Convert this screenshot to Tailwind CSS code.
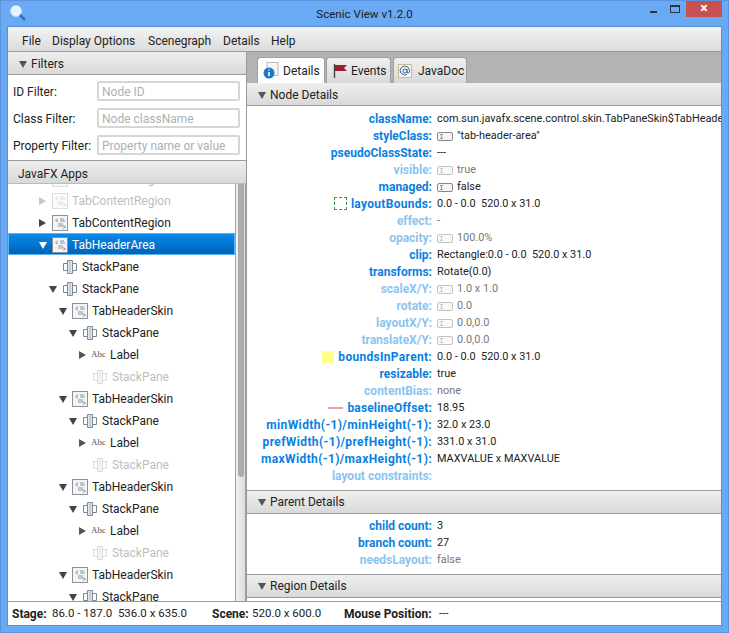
<!DOCTYPE html>
<html lang="en">
<head>
  <meta charset="UTF-8" />
  <script src="https://cdn.jsdelivr.net/npm/@tailwindcss/browser@4"></script>
  <title>Scenic View</title>
</head>
<body class="bg-[#6aa9f4] shadow-[inset_0_0_0_1px_#5b94dc] h-[633px] w-[729px] overflow-hidden font-['Roboto','Noto_Sans',sans-serif] text-[12px] text-[#222]">

  <svg class="hidden">
    <symbol id="cls" viewBox="0 0 16 16">
      <rect x="0.5" y="0.5" width="15" height="15" fill="#f4f4f4" stroke="#8a939b"/>
      <path d="M6 4L3.500 5.500L6 7M8 4h4M8 6h5M6 9h5M6 11h5M11 10.500l2.500 1.500l-2.500 1.500" fill="none" stroke="#8d969e"/>
    </symbol>
    <symbol id="pane" viewBox="0 0 14 16">
      <path d="M0.500 4.500h4v7h-4zM9.500 4.500h4v7h-4z" fill="#fff" stroke="#7c8894"/>
      <path d="M4.500 1.500h5v13h-5z" fill="#e3e9f0" stroke="#7c8894"/>
      <path d="M7 1.500v13" stroke="#a5afb9"/>
    </symbol>
    <symbol id="toggle" viewBox="0 0 16 9">
      <rect x="0.500" y="0.500" width="15" height="8" rx="1.500" fill="#f4f4f4" stroke="#888"/>
      <path d="M3 2.500h3M3 6.500h3M4.500 2.500v4" stroke="#999" fill="none"/>
    </symbol>
  </svg>

  <!-- Title bar -->
  <header class="h-[27px] flex items-start relative">
    <svg class="w-[18px] h-[18px] ml-[9px] mt-[4px]" viewBox="0 0 18 18">
      <circle cx="7" cy="7" r="5.500" fill="#e8f4ff" stroke="#bcdcf7"/>
      <path d="M11 11l5 5" stroke="#2f6fc0" stroke-width="2.500"/>
    </svg>
    <div class="absolute left-0 right-0 top-[5px] text-center text-[11.6px] text-[#1c1c1c] leading-[18px]">Scenic View v1.2.0</div>
    <div class="ml-auto flex items-start mr-[7px]">
      <div class="w-[7px] h-[2px] bg-[#2b3340] mt-[11px] mr-[13px]"></div>
      <div class="w-[10px] h-[8px] border border-[#2b3340] border-t-2 mt-[5px] mr-[6px]"></div>
      <div class="w-[36px] h-[16px] mt-px bg-[#c75050] text-white text-[14px] leading-[15px] text-center font-bold">×</div>
    </div>
  </header>

  <div class="mx-[8px] h-[598px] bg-white flex flex-col outline outline-[#5b8fd0]">
    <!-- Menu -->
    <nav class="h-[25px] pt-[3px] flex items-center pl-[14px] bg-gradient-to-b from-[#f3f3f3] to-[#dcdcdc] border-b border-[#9a9a9a] shrink-0">
      <span class="w-[30px]">File</span><span class="w-[96px]">Display Options</span><span class="w-[75px]">Scenegraph</span><span class="w-[48px]">Details</span><span>Help</span>
    </nav>

    <div class="flex flex-1 min-h-0">
      <!-- Left side -->
      <aside class="w-[238px] flex flex-col shrink-0">
        <div class="h-[23px] pt-[2px] flex items-center pl-[11px] gap-[4px] bg-gradient-to-b from-[#efefef] to-[#d9d9d9] border-b border-[#9a9a9a]">
          <span class="w-0 h-0 border-x-[4px] border-x-transparent border-t-[7px] border-t-[#555]"></span>
          <span>Filters</span>
        </div>
        <div class="h-[86px] px-[5px] pt-[6px] flex flex-col gap-[7px] border-b border-[#9a9a9a]">
          <label class="flex items-center h-[20px]"><span class="w-[84px] pt-[2px]">ID Filter:</span><span class="w-[143px] h-[20px] border-2 border-[#d6d6d6] rounded-[2px] pl-[3px] leading-[18px] text-[#b0b0b0]">Node ID</span></label>
          <label class="flex items-center h-[20px]"><span class="w-[84px] pt-[2px]">Class Filter:</span><span class="w-[143px] h-[20px] border-2 border-[#d6d6d6] rounded-[2px] pl-[3px] leading-[18px] text-[#b0b0b0]">Node className</span></label>
          <label class="flex items-center h-[20px]"><span class="w-[84px] pt-[2px]">Property Filter:</span><span class="w-[143px] h-[20px] border-2 border-[#d6d6d6] rounded-[2px] pl-[3px] leading-[18px] text-[#b0b0b0]">Property name or value</span></label>
        </div>
        <div class="h-[23px] pt-[4px] flex items-center pl-[10px] bg-gradient-to-b from-[#efefef] to-[#d9d9d9] border-b border-[#bbb] shrink-0">JavaFX Apps</div>

        <div class="flex-1 flex min-h-0 overflow-hidden">
          <div class="flex-1 min-w-0 overflow-hidden">
            <div class="-mt-[17px] [&>div]:h-[22px] [&>div]:pt-[2px] [&>div]:flex [&>div]:items-center [&>div]:whitespace-nowrap">
              <div class="pl-[31px] opacity-30"><span class="w-[13px]"></span><svg class="w-[16px] h-[16px] mr-[4px]"><use href="#cls"/></svg>TabContentRegion</div>
              <div class="pl-[31px] opacity-30"><span class="w-0 h-0 mr-[6px] border-y-[4px] border-y-transparent border-l-[7px] border-l-[#444]"></span><svg class="w-[16px] h-[16px] mr-[4px]"><use href="#cls"/></svg>TabContentRegion</div>
              <div class="pl-[31px]"><span class="w-0 h-0 mr-[6px] border-y-[4px] border-y-transparent border-l-[7px] border-l-[#444]"></span><svg class="w-[16px] h-[16px] mr-[4px]"><use href="#cls"/></svg>TabContentRegion</div>
              <div class="pl-[30px] bg-gradient-to-b from-[#0a8aea] to-[#0063b8] border border-[#5cb5f5] text-white"><span class="w-0 h-0 mr-[5px] border-x-[4px] border-x-transparent border-t-[7px] border-t-white"></span><svg class="w-[16px] h-[16px] mr-[4px]"><use href="#cls"/></svg>TabHeaderArea</div>
              <div class="pl-[55px]"><svg class="w-[14px] h-[16px] mr-[5px]"><use href="#pane"/></svg>StackPane</div>
              <div class="pl-[41px]"><span class="w-0 h-0 mr-[6px] border-x-[4px] border-x-transparent border-t-[7px] border-t-[#444]"></span><svg class="w-[14px] h-[16px] mr-[5px]"><use href="#pane"/></svg>StackPane</div>
              <div class="pl-[51px]"><span class="w-0 h-0 mr-[5px] border-x-[4px] border-x-transparent border-t-[7px] border-t-[#444]"></span><svg class="w-[16px] h-[16px] mr-[4px]"><use href="#cls"/></svg>TabHeaderSkin</div>
              <div class="pl-[61px]"><span class="w-0 h-0 mr-[6px] border-x-[4px] border-x-transparent border-t-[7px] border-t-[#444]"></span><svg class="w-[14px] h-[16px] mr-[5px]"><use href="#pane"/></svg>StackPane</div>
              <div class="pl-[71px]"><span class="w-0 h-0 mr-[5px] border-y-[4px] border-y-transparent border-l-[7px] border-l-[#555]"></span><span class="w-[15px] mr-[4px] font-['Liberation_Serif'] text-[9px] text-[#555]">Abc</span>Label</div>
              <div class="pl-[85px] opacity-30"><svg class="w-[14px] h-[16px] mr-[5px]"><use href="#pane"/></svg>StackPane</div>
              <div class="pl-[51px]"><span class="w-0 h-0 mr-[5px] border-x-[4px] border-x-transparent border-t-[7px] border-t-[#444]"></span><svg class="w-[16px] h-[16px] mr-[4px]"><use href="#cls"/></svg>TabHeaderSkin</div>
              <div class="pl-[61px]"><span class="w-0 h-0 mr-[6px] border-x-[4px] border-x-transparent border-t-[7px] border-t-[#444]"></span><svg class="w-[14px] h-[16px] mr-[5px]"><use href="#pane"/></svg>StackPane</div>
              <div class="pl-[71px]"><span class="w-0 h-0 mr-[5px] border-y-[4px] border-y-transparent border-l-[7px] border-l-[#555]"></span><span class="w-[15px] mr-[4px] font-['Liberation_Serif'] text-[9px] text-[#555]">Abc</span>Label</div>
              <div class="pl-[85px] opacity-30"><svg class="w-[14px] h-[16px] mr-[5px]"><use href="#pane"/></svg>StackPane</div>
              <div class="pl-[51px]"><span class="w-0 h-0 mr-[5px] border-x-[4px] border-x-transparent border-t-[7px] border-t-[#444]"></span><svg class="w-[16px] h-[16px] mr-[4px]"><use href="#cls"/></svg>TabHeaderSkin</div>
              <div class="pl-[61px]"><span class="w-0 h-0 mr-[6px] border-x-[4px] border-x-transparent border-t-[7px] border-t-[#444]"></span><svg class="w-[14px] h-[16px] mr-[5px]"><use href="#pane"/></svg>StackPane</div>
              <div class="pl-[71px]"><span class="w-0 h-0 mr-[5px] border-y-[4px] border-y-transparent border-l-[7px] border-l-[#555]"></span><span class="w-[15px] mr-[4px] font-['Liberation_Serif'] text-[9px] text-[#555]">Abc</span>Label</div>
              <div class="pl-[85px] opacity-30"><svg class="w-[14px] h-[16px] mr-[5px]"><use href="#pane"/></svg>StackPane</div>
              <div class="pl-[51px]"><span class="w-0 h-0 mr-[5px] border-x-[4px] border-x-transparent border-t-[7px] border-t-[#444]"></span><svg class="w-[16px] h-[16px] mr-[4px]"><use href="#cls"/></svg>TabHeaderSkin</div>
              <div class="pl-[61px]"><span class="w-0 h-0 mr-[6px] border-x-[4px] border-x-transparent border-t-[7px] border-t-[#444]"></span><svg class="w-[14px] h-[16px] mr-[5px]"><use href="#pane"/></svg>StackPane</div>
            </div>
          </div>
          <div class="w-[11px] shrink-0 bg-gradient-to-r from-[#f2f2f2] to-[#dcdcdc] border-x border-[#9f9f9f] flex">
            <div class="w-[6px] h-[293px] bg-[#ababab] rounded-b-[3px] ml-[2px]"></div>
          </div>
        </div>
      </aside>

      <!-- Right side -->
      <main class="flex-1 min-w-0 flex flex-col border-l border-[#9a9a9a]">
        <div class="h-[31px] bg-[#b3b3b3] flex items-end pl-[10px] shrink-0">
          <div class="h-[26px] w-[68px] bg-white rounded-t-[4px] border border-b-0 border-[#a0a0a0] flex items-center gap-[4px] pl-[5px]">
            <svg class="w-[16px] h-[17px]" viewBox="0 0 16 17"><rect x="4" y="0.500" width="11" height="13" fill="#f6f6f6" stroke="#bbb"/><circle cx="6" cy="11" r="5.500" fill="#1c78c8"/><path d="M6 7.500v1M6 10v4" stroke="#fff" stroke-width="1.600"/></svg>
            <span>Details</span>
          </div>
          <div class="h-[26px] w-[65px] ml-px bg-gradient-to-b from-[#f0f0f0] to-[#d9d9d9] rounded-t-[4px] border border-b-0 border-[#a0a0a0] flex items-center gap-[4px] pl-[6px]">
            <svg class="w-[14px] h-[16px]" viewBox="0 0 14 16"><path d="M1.500 1v14" stroke="#444" stroke-width="1.400"/><path d="M2 2h12l-3 3l3 3h-12z" fill="#9c1f2b"/></svg>
            <span>Events</span>
          </div>
          <div class="h-[26px] w-[74px] ml-[2px] bg-gradient-to-b from-[#f0f0f0] to-[#d9d9d9] rounded-t-[4px] border border-b-0 border-[#a0a0a0] flex items-center gap-[6px] pl-[4px]">
            <svg class="w-[14px] h-[16px]" viewBox="0 0 14 16"><path d="M0.500 1.500h13v13h-13z" fill="#fbf5e6" stroke="#c9b98a"/><circle cx="7" cy="8" r="2" fill="none" stroke="#2a66b0"/><path d="M9 6v3q0 1.500 1.500 1q1.500-1 1-3q-1-4-5-4q-4 .5-4.500 4.500q.5 4 4.500 4.500q1.500 0 2.500-.5" fill="none" stroke="#2a66b0"/></svg>
            <span>JavaDoc</span>
          </div>
        </div>

        <div class="h-[23px] pt-[2px] flex items-center pl-[11px] gap-[4px] bg-gradient-to-b from-[#efefef] to-[#d9d9d9] border-b border-[#9a9a9a] shrink-0">
          <span class="w-0 h-0 border-x-[4px] border-x-transparent border-t-[7px] border-t-[#555]"></span><span>Node Details</span>
        </div>
        <div class="h-[384px] pt-[4px] shrink-0 overflow-hidden grid grid-cols-[185px_1fr] auto-rows-[17px] items-center whitespace-pre [&>span]:text-[10.9px] [&>span]:pt-[2px]">
          <b class="text-right text-[#0a7fe0]">className:</b><span class="pl-[5px] overflow-hidden">com.sun.javafx.scene.control.skin.TabPaneSkin$TabHeaderArea</span>
          <b class="text-right text-[#0a7fe0]">styleClass:</b><span class="pl-[5px] flex items-center gap-[4px]"><svg class="w-[16px] h-[9px]"><use href="#toggle"/></svg>"tab-header-area"</span>
          <b class="text-right text-[#0a7fe0]">pseudoClassState:</b><span class="pl-[5px]">---</span>
          <b class="text-right text-[#8cc4f0]">visible:</b><span class="pl-[5px] flex items-center gap-[4px] text-[#777]"><svg class="w-[16px] h-[9px] opacity-50"><use href="#toggle"/></svg>true</span>
          <b class="text-right text-[#0a7fe0]">managed:</b><span class="pl-[5px] flex items-center gap-[4px]"><svg class="w-[16px] h-[9px]"><use href="#toggle"/></svg>false</span>
          <b class="text-right text-[#0a7fe0] tracking-[0.3px] flex items-center justify-end gap-[4px]"><span class="w-[13px] h-[13px] border border-dashed border-[#2f9e44]"></span>layoutBounds:</b><span class="pl-[5px]">0.0 - 0.0  520.0 x 31.0</span>
          <b class="text-right text-[#8cc4f0]">effect:</b><span class="pl-[5px] text-[#777]">-</span>
          <b class="text-right text-[#8cc4f0]">opacity:</b><span class="pl-[5px] flex items-center gap-[4px] text-[#777]"><svg class="w-[16px] h-[9px] opacity-50"><use href="#toggle"/></svg>100.0%</span>
          <b class="text-right text-[#0a7fe0]">clip:</b><span class="pl-[5px]">Rectangle:0.0 - 0.0  520.0 x 31.0</span>
          <b class="text-right text-[#0a7fe0]">transforms:</b><span class="pl-[5px]">Rotate(0.0)</span>
          <b class="text-right text-[#8cc4f0]">scaleX/Y:</b><span class="pl-[5px] flex items-center gap-[4px] text-[#777]"><svg class="w-[16px] h-[9px] opacity-50"><use href="#toggle"/></svg>1.0 x 1.0</span>
          <b class="text-right text-[#8cc4f0]">rotate:</b><span class="pl-[5px] flex items-center gap-[4px] text-[#777]"><svg class="w-[16px] h-[9px] opacity-50"><use href="#toggle"/></svg>0.0</span>
          <b class="text-right text-[#8cc4f0]">layoutX/Y:</b><span class="pl-[5px] flex items-center gap-[4px] text-[#777]"><svg class="w-[16px] h-[9px] opacity-50"><use href="#toggle"/></svg>0.0,0.0</span>
          <b class="text-right text-[#8cc4f0]">translateX/Y:</b><span class="pl-[5px] flex items-center gap-[4px] text-[#777]"><svg class="w-[16px] h-[9px] opacity-50"><use href="#toggle"/></svg>0.0,0.0</span>
          <b class="text-right text-[#0a7fe0] tracking-[0.3px] flex items-center justify-end gap-[4px]"><span class="w-[12px] h-[12px] bg-[#ffff8c]"></span>boundsInParent:</b><span class="pl-[5px]">0.0 - 0.0  520.0 x 31.0</span>
          <b class="text-right text-[#0a7fe0]">resizable:</b><span class="pl-[5px]">true</span>
          <b class="text-right text-[#8cc4f0]">contentBias:</b><span class="pl-[5px] text-[#777]">none</span>
          <b class="text-right text-[#0a7fe0] tracking-[0.15px] flex items-center justify-end gap-[4px]"><span class="w-[15px] h-[2px] bg-[#f4a0a0]"></span>baselineOffset:</b><span class="pl-[5px]">18.95</span>
          <b class="text-right text-[#0a7fe0] tracking-[0.38px]">minWidth(-1)/minHeight(-1):</b><span class="pl-[5px]">32.0 x 23.0</span>
          <b class="text-right text-[#0a7fe0] tracking-[0.38px]">prefWidth(-1)/prefHeight(-1):</b><span class="pl-[5px]">331.0 x 31.0</span>
          <b class="text-right text-[#0a7fe0] tracking-[0.38px]">maxWidth(-1)/maxHeight(-1):</b><span class="pl-[5px]">MAXVALUE x MAXVALUE</span>
          <b class="text-right text-[#8cc4f0]">layout constraints:</b><span></span>
        </div>

        <div class="h-[24px] flex items-center pl-[11px] gap-[4px] bg-gradient-to-b from-[#efefef] to-[#d9d9d9] border-y border-[#9a9a9a] shrink-0">
          <span class="w-0 h-0 border-x-[4px] border-x-transparent border-t-[7px] border-t-[#555]"></span><span>Parent Details</span>
        </div>
        <div class="h-[60px] pt-[3px] shrink-0 grid grid-cols-[185px_1fr] auto-rows-[17px] items-center [&>span]:text-[10.9px] [&>span]:pt-[2px]">
          <b class="text-right text-[#0a7fe0]">child count:</b><span class="pl-[5px]">3</span>
          <b class="text-right text-[#0a7fe0]">branch count:</b><span class="pl-[5px]">27</span>
          <b class="text-right text-[#8cc4f0]">needsLayout:</b><span class="pl-[5px] text-[#777]">false</span>
        </div>
        <div class="h-[24px] flex items-center pl-[11px] gap-[4px] bg-gradient-to-b from-[#efefef] to-[#d9d9d9] border-y border-[#9a9a9a] shrink-0">
          <span class="w-0 h-0 border-x-[4px] border-x-transparent border-t-[7px] border-t-[#555]"></span><span>Region Details</span>
        </div>
      </main>
    </div>

    <!-- Status bar -->
    <footer class="h-[24px] shrink-0 border-t border-[#9a9a9a] flex items-center pl-[4px] whitespace-pre [&>span]:text-[11.5px]">
      <b class="w-[40px]">Stage:</b><span class="w-[160px]">86.0 - 187.0  536.0 x 635.0</span>
      <b class="w-[40px]">Scene:</b><span class="w-[92px]">520.0 x 600.0</span>
      <b class="w-[95px]">Mouse Position:</b><span>---</span>
    </footer>
  </div>
</body>
</html>
